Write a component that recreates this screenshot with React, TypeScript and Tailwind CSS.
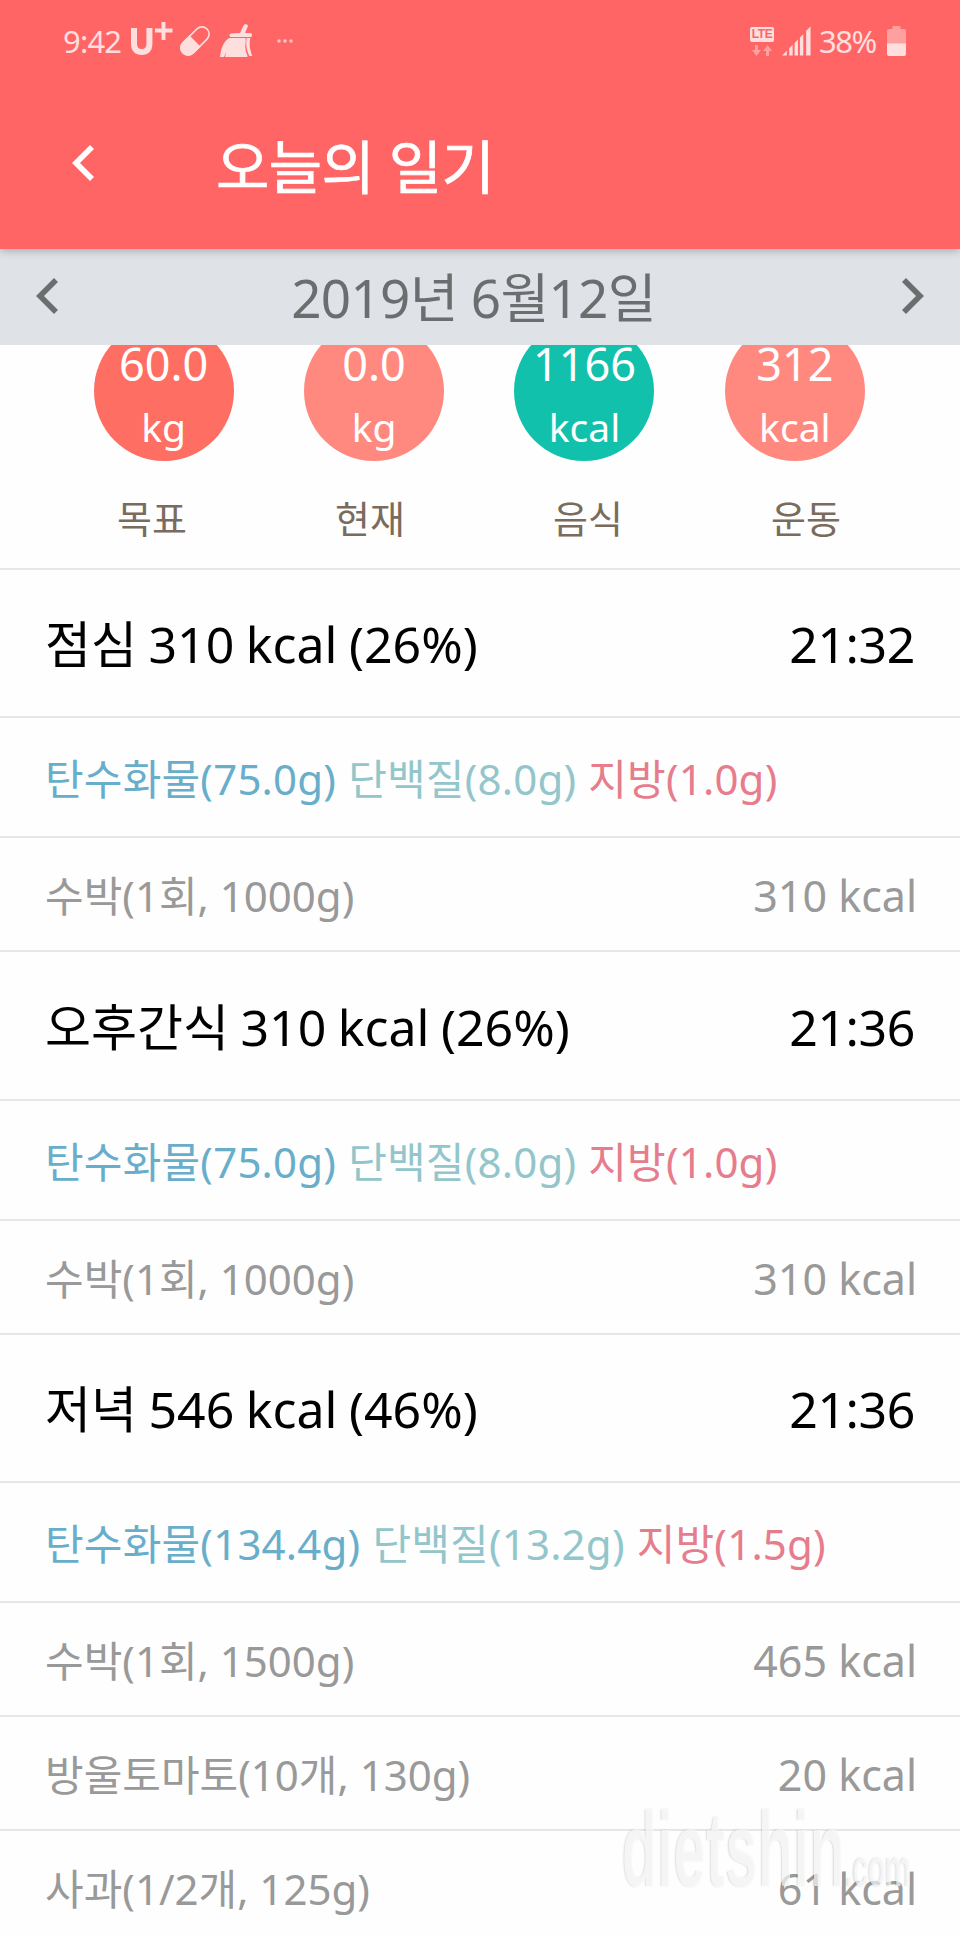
type Meal = {
    title: string;
    time: string;
    carbs: string;
    protein: string;
    fat: string;
    foods: { name: string; kcal: string }[];
};

const meals: Meal[] = [
    {
        title: "점심 310 kcal (26%)",
        time: "21:32",
        carbs: "75.0g",
        protein: "8.0g",
        fat: "1.0g",
        foods: [{ name: "수박(1회, 1000g)", kcal: "310 kcal" }],
    },
    {
        title: "오후간식 310 kcal (26%)",
        time: "21:36",
        carbs: "75.0g",
        protein: "8.0g",
        fat: "1.0g",
        foods: [{ name: "수박(1회, 1000g)", kcal: "310 kcal" }],
    },
    {
        title: "저녁 546 kcal (46%)",
        time: "21:36",
        carbs: "134.4g",
        protein: "13.2g",
        fat: "1.5g",
        foods: [
            { name: "수박(1회, 1500g)", kcal: "465 kcal" },
            { name: "방울토마토(10개, 130g)", kcal: "20 kcal" },
            { name: "사과(1/2개, 125g)", kcal: "61 kcal" },
        ],
    },
];

const stats = [
    { value: "60.0", unit: "kg", label: "목표", color: "bg-[#ff6e62]" },
    { value: "0.0", unit: "kg", label: "현재", color: "bg-[#ff897f]" },
    { value: "1166", unit: "kcal", label: "음식", color: "bg-[#12c1ab]" },
    { value: "312", unit: "kcal", label: "운동", color: "bg-[#ff897f]" },
];

function Chevron({ className, flip }: { className: string; flip?: boolean }) {
    return (
        <svg viewBox="0 0 22 36" className={className} fill="none" stroke="currentColor" strokeWidth="5.6">
            <path d={flip ? "M2 2 L18 18 L2 34" : "M20 2 L4 18 L20 34"} />
        </svg>
    );
}

function StatusBar() {
    return (
        <div className="flex h-[82px] items-center pl-[63px] pr-[54px] text-[#ffdede]">
            <span className="w-[66px] text-[31px] leading-[40px] tracking-[-0.8px]">9:42</span>
            <svg width="44" height="36" viewBox="0 0 44 36" className="-mt-1 shrink-0">
                <path d="M5 7v16c0 5.500 3 8 7.700 8s7.700-2.500 7.700-8V7" fill="none" stroke="currentColor" strokeWidth="6" />
                <path d="M34.500 1v18M26 9.500h17.500" fill="none" stroke="currentColor" strokeWidth="4" />
            </svg>
            <svg width="32" height="32" viewBox="0 0 32 32" className="ml-[6px] shrink-0">
                <g transform="rotate(45 16 16)">
                    <rect x="8.800" y="-1" width="14.400" height="34" rx="7.200" fill="none" stroke="currentColor" strokeWidth="1.600" />
                    <path d="M8 16h16v9.500a8 8 0 0 1-16 0z" fill="currentColor" />
                </g>
            </svg>
            <svg width="34" height="34" viewBox="0 0 34 34" className="ml-[9px] shrink-0" fill="currentColor">
                <path d="M23.500 1.500c1-2 5-1.500 4.300 1L25 9h5.500c2 0 2 4 0 4H11c-2 0-2-3 0-3.600L20 9z" />
                <path d="M9 14h16.500c1 3-1 7 0 11 0 3 2 5 2 8H5l1-5-2 5H0c1-8 3-15 9-19z" />
                <path d="M26.700 14h3.600c-1 5-1 10 2 18h-3c-2-5-4-10-2.600-18z" />
            </svg>
            <svg width="18" height="6" viewBox="0 0 18 6" className="ml-[22px] shrink-0" fill="#ffc4c4">
                <circle cx="3" cy="3" r="1.800" />
                <circle cx="9" cy="3" r="1.800" />
                <circle cx="15" cy="3" r="1.800" />
            </svg>
            <div className="ml-auto flex items-center">
                <div className="flex w-6 flex-col items-center gap-[3px]">
                    <span className="flex h-[15px] w-6 items-center justify-center rounded-[2px] bg-[#ffdede] font-['Liberation_Sans'] text-[12px] leading-none font-bold tracking-[-0.5px] text-[#ff6565]">LTE</span>
                    <svg width="20" height="11" viewBox="0 0 20 11" fill="#ffa0a0">
                        <path d="M3 0h3v5h3L4.500 11 0 5h3zM14 11h3V6h3L15.500 0 11 6h3z" />
                    </svg>
                </div>
                <svg width="30" height="30" viewBox="0 0 31 30" className="ml-[8px]" fill="currentColor">
                    <path d="M0 30l5-5v5zM7.500 22.500l3.500-3.500v11h-3.500zM13 17l3.500-3.500V30H13zM18.500 11.500L22 8v22h-3.500zM25 4.500L29.500 0v30H25z" />
                </svg>
                <span className="ml-[7px] w-[58px] text-[31px] leading-[40px] tracking-[-1.5px]">38%</span>
                <svg width="19" height="30" viewBox="0 0 19 30" className="ml-[10px]">
                    <path d="M2 3h3.500V0h8v3H17a2 2 0 0 1 2 2v13H0V5a2 2 0 0 1 2-2z" fill="#ffa0a0" />
                    <path d="M0 17.500h19V28a2 2 0 0 1-2 2H2a2 2 0 0 1-2-2z" fill="currentColor" />
                </svg>
            </div>
        </div>
    );
}

function Summary() {
    return (
        <div className="flex h-[224.500px] flex-col border-b-2 border-[#e6e6e6]">
            <div className="flex h-[116px] shrink-0 items-end overflow-hidden pl-[58.5px]">
                {stats.map((s) => (
                    <div key={s.label} className="flex w-[210.4px] shrink-0 justify-center">
                        <div className={`flex h-[140px] w-[140px] flex-col items-center rounded-full pt-[14px] text-white ${s.color}`}>
                            <span className="text-[45px] leading-[58px]">{s.value}</span>
                            <span className="pt-[4px] text-[39px] leading-[60px]">{s.unit}</span>
                        </div>
                    </div>
                ))}
            </div>
            <div className="flex pt-[27px] pl-[43px]">
                {stats.map((s) => (
                    <span key={s.label} className="w-[218px] text-center text-[38px] leading-[60px] text-[#7a6c5d]">{s.label}</span>
                ))}
            </div>
        </div>
    );
}

function MealSection({ meal }: { meal: Meal }) {
    return (
        <section>
            <div className="flex h-[148.500px] items-center justify-between border-b-2 border-[#e6e6e6] pt-[3px] pr-[45px] pl-[45px] text-[50px] leading-[60px] text-black">
                <h2 className="[word-spacing:-1.5px]">{meal.title}</h2>
                <span className="tracking-[-0.4px]">{meal.time}</span>
            </div>
            <div className="flex h-[120px] items-center gap-[12px] border-b-2 border-[#e6e6e6] pt-[4px] pl-[45px] text-[42px] leading-[60px] tracking-[0.2px]">
                <span className="text-[#68aecb]">탄수화물({meal.carbs})</span>
                <span className="text-[#92c6cb]">단백질({meal.protein})</span>
                <span className="text-[#e67c8c]">지방({meal.fat})</span>
            </div>
            {meal.foods.map((f) => (
                <div key={f.name} className="flex h-[114px] items-center justify-between border-b-2 border-[#e6e6e6] pt-[4px] pr-[43px] pl-[45px] text-[42px] leading-[60px] text-[#999999]">
                    <span>{f.name}</span>
                    <span className="text-[43px]">{f.kcal}</span>
                </div>
            ))}
        </section>
    );
}

export default function App() {
    return (
        <div className="relative h-[1936px] w-[960px] overflow-hidden bg-[#fefefe] font-['Noto_Sans','Noto_Sans_CJK_KR',sans-serif]">
            <header className="relative h-[249px] bg-[#ff6565] shadow-[0_2px_8px_rgba(0,0,0,0.25)]">
                <StatusBar />
                <div className="flex h-[166px] items-center pb-[4px] pl-[72px] text-white">
                    <Chevron className="h-[36px] w-[22px]" />
                    <h1 className="ml-[122px] pt-[8px] text-[58px] leading-[80px] font-normal tracking-[-0.6px] [-webkit-text-stroke:0.7px_white]">오늘의 일기</h1>
                </div>
            </header>
            <div className="flex h-[96px] items-center justify-between bg-[#dfe3e8] px-[36px] pb-[2px] text-[#6b6e6e]">
                <Chevron className="h-[36px] w-[22px]" />
                <span className="pt-[4px] pr-[13px] text-[53px] leading-[80px] tracking-[-0.7px]">2019년 6월12일</span>
                <Chevron flip className="h-[36px] w-[22px]" />
            </div>
            <Summary />
            {meals.map((m) => (
                <MealSection key={m.title} meal={m} />
            ))}
            <div className="pointer-events-none absolute top-[1789px] left-[622px] flex origin-left scale-x-[0.55] items-baseline font-['Liberation_Sans'] font-bold text-white/70 [text-shadow:-2px_0_2px_rgba(0,0,0,0.13)]">
                <span className="text-[106px] leading-[120px]">dietshin</span>
                <span className="text-[54px] tracking-[-2px]">.com</span>
            </div>
        </div>
    );
}
